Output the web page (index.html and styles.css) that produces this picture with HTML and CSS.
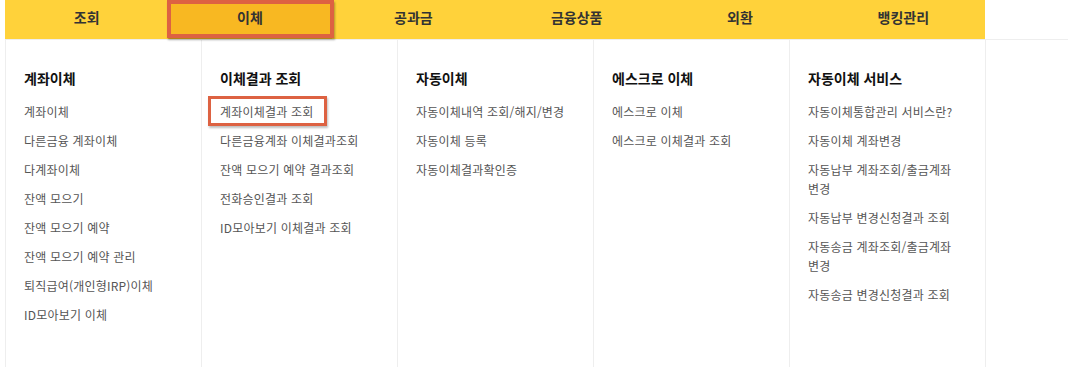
FILE: index.html
```html
<!DOCTYPE html>
<html lang="ko">
<head>
    <meta charset="UTF-8">
    <meta name="viewport" content="width=device-width, initial-scale=1.0">
    <title>이체</title>
    <link rel="stylesheet" href="styles.css">
</head>
<body>
    <ul class="gnb">
        <li class="gnb-item">조회</li>
        <li class="gnb-item on">이체</li>
        <li class="gnb-item">공과금</li>
        <li class="gnb-item">금융상품</li>
        <li class="gnb-item">외환</li>
        <li class="gnb-item">뱅킹관리</li>
    </ul>

    <div class="sub-menu">
        <div class="col">
            <h3>계좌이체</h3>
            <ul>
                <li>계좌이체</li>
                <li>다른금융 계좌이체</li>
                <li>다계좌이체</li>
                <li>잔액 모으기</li>
                <li>잔액 모으기 예약</li>
                <li>잔액 모으기 예약 관리</li>
                <li>퇴직급여(개인형IRP)이체</li>
                <li>ID모아보기 이체</li>
            </ul>
        </div>
        <div class="col">
            <h3>이체결과 조회</h3>
            <ul>
                <li><span class="mark">계좌이체결과 조회</span></li>
                <li>다른금융계좌 이체결과조회</li>
                <li>잔액 모으기 예약 결과조회</li>
                <li>전화승인결과 조회</li>
                <li>ID모아보기 이체결과 조회</li>
            </ul>
        </div>
        <div class="col">
            <h3>자동이체</h3>
            <ul>
                <li>자동이체내역 조회/해지/변경</li>
                <li>자동이체 등록</li>
                <li>자동이체결과확인증</li>
            </ul>
        </div>
        <div class="col">
            <h3>에스크로 이체</h3>
            <ul>
                <li>에스크로 이체</li>
                <li>에스크로 이체결과 조회</li>
            </ul>
        </div>
        <div class="col">
            <h3>자동이체 서비스</h3>
            <ul>
                <li>자동이체통합관리 서비스란?</li>
                <li>자동이체 계좌변경</li>
                <li>자동납부 계좌조회/출금계좌 변경</li>
                <li>자동납부 변경신청결과 조회</li>
                <li>자동송금 계좌조회/출금계좌 변경</li>
                <li>자동송금 변경신청결과 조회</li>
            </ul>
        </div>
    </div>
</body>
</html>
```

FILE: styles.css
```css
body {
    margin: 0;
    font-family: "Noto Sans CJK KR", "Noto Sans", sans-serif;
    background-color: #fff;
    overflow: hidden;
}
ul {
    list-style: none;
    margin: 0;
    padding: 0;
}
.gnb {
    display: flex;
    width: 980px;
    height: 39px;
    margin-left: 5px;
    background-color: #ffd23a;
}
.gnb-item {
    flex: 1;
    text-align: center;
    line-height: 35px;
    font-size: 14px;
    font-weight: bold;
    color: #333;
}
.gnb-item.on {
    position: relative;
    background-color: #f8b822;
}
.gnb-item.on::after {
    content: "";
    position: absolute;
    left: -1px;
    right: -2px;
    top: 0;
    bottom: 1px;
    border: 4px solid #dd6242;
    box-shadow: 1px 2px 2px rgba(0, 0, 0, 0.3);
}
.sub-menu {
    display: flex;
    height: 328px;
    margin-left: 5px;
    border-top: 1px solid #eee;
}
.col {
    box-sizing: border-box;
    width: 196px;
    flex-shrink: 0;
    padding: 28px 26px 0 18px;
    border-left: 1px solid #eee;
}
.col:last-child {
    width: 197px;
    border-right: 1px solid #eee;
}
.col h3 {
    margin: 0 0 14px;
    font-size: 14px;
    line-height: 20px;
    color: #111;
}
.col li {
    font-size: 12px;
    line-height: 19px;
    letter-spacing: 0.2px;
    color: #555;
    margin-bottom: 10px;
}
.mark {
    position: relative;
}
.mark::after {
    content: "";
    position: absolute;
    left: -12px;
    right: -14px;
    top: -7px;
    bottom: -6px;
    border: 3px solid #dd6242;
    box-shadow: 1px 2px 2px rgba(0, 0, 0, 0.25);
}
```
